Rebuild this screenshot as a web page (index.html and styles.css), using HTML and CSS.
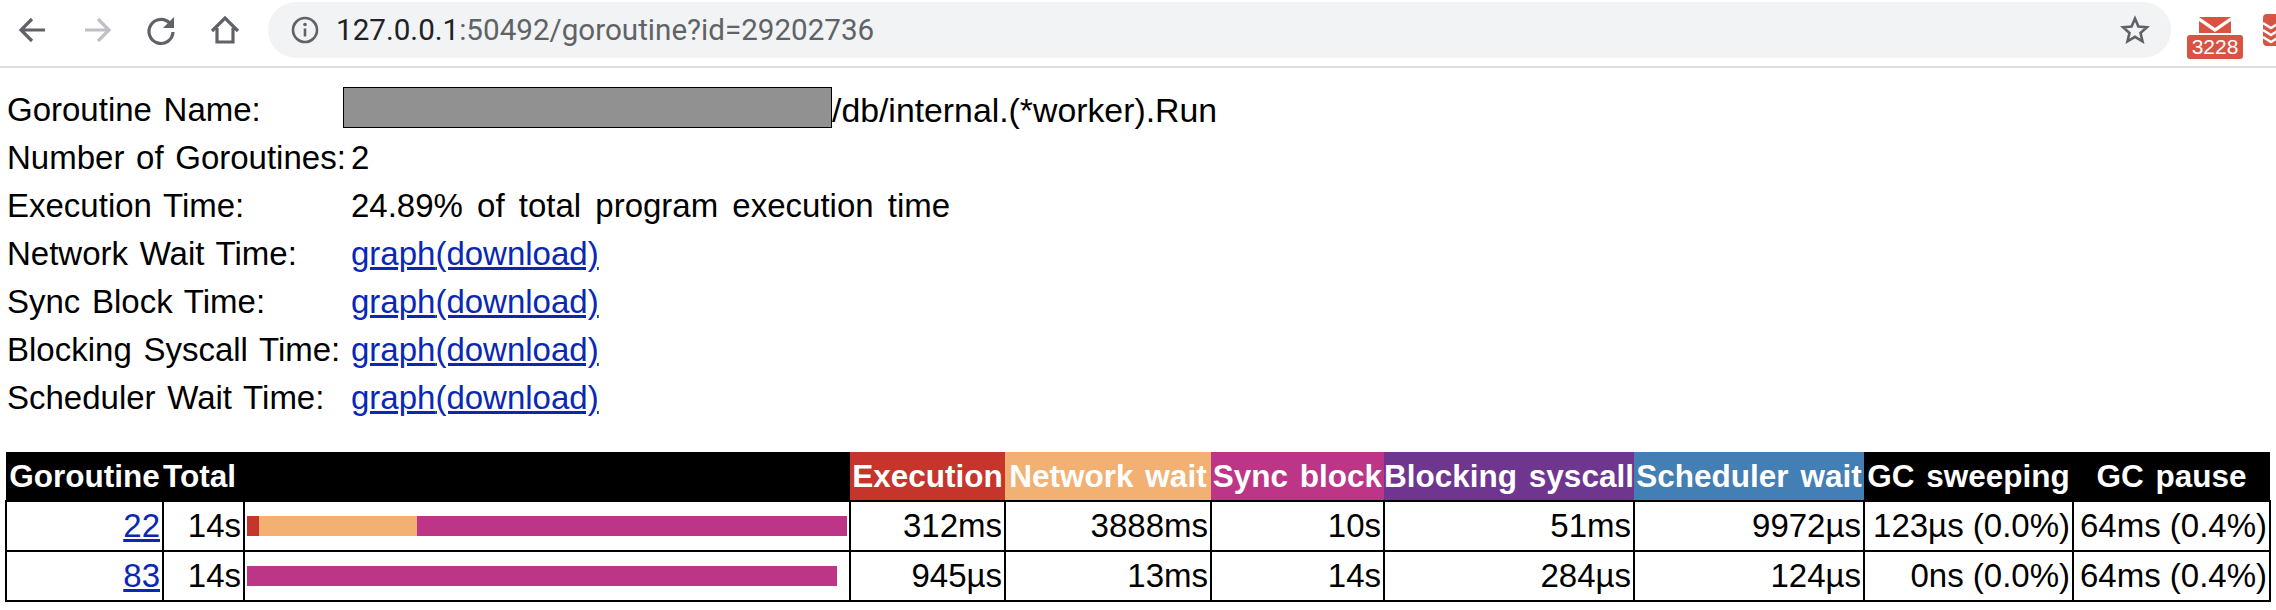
FILE: index.html
```html
<!DOCTYPE html>
<html lang="en">
<head>
<meta charset="utf-8">
<title>Goroutine</title>
<link rel="stylesheet" href="styles.css">
</head>
<body>
<header class="toolbar">
  <nav class="nav-icons">
    <svg class="nav-icon" viewBox="0 0 34 34"><path d="M29 17H6M16 6 5 17l11 11" class="stroke dark"/></svg>
    <svg class="nav-icon" viewBox="0 0 34 34"><path d="M5 17h23M18 6l11 11-11 11" class="stroke light"/></svg>
    <svg class="nav-icon" viewBox="0 0 34 34"><path d="M26 10.5A12 12 0 1 0 29 19" class="stroke dark"/><path d="M30 4v11H19z" class="fill"/></svg>
    <svg class="nav-icon" viewBox="0 0 34 34"><path d="M4 18 17 5l13 13M9 15v14h16V15" class="stroke dark"/></svg>
  </nav>
  <div class="omnibox">
    <svg class="info-icon" viewBox="0 0 28 28"><circle cx="14" cy="14" r="12" class="thin"/><path d="M14 12.5v8" class="thin"/><circle cx="14" cy="8.5" r="1.8" class="fill"/></svg>
    <div class="url"><span class="host">127.0.0.1</span>:50492/goroutine?id=29202736</div>
    <svg class="star" viewBox="0 0 30 30"><path d="M15 3.5l3.4 8 8.6.7-6.5 5.7 2 8.4-7.5-4.5-7.5 4.5 2-8.4L3 12.2l8.6-.7z" class="thin"/></svg>
  </div>
  <div class="extensions">
    <div class="mail">
      <svg class="envelope" viewBox="0 0 32 16"><path d="M0 0h32L16 11z" class="red"/><path d="M0 4l16 11L32 4v12H0z" class="red"/></svg>
      <div class="badge">3228</div>
    </div>
    <svg class="layers" viewBox="0 0 32 32"><rect width="32" height="32" rx="4" class="red"/><path d="M0 9l8 5 8-5M0 16l8 5 8-5M0 23l8 5 8-5" class="white-line"/></svg>
  </div>
</header>

<table class="info">
  <tr><td class="label">Goroutine Name:</td><td class="value name"><span class="name-tail">/db/internal.(*worker).Run</span><span class="redacted"></span></td></tr>
  <tr><td class="label">Number of Goroutines:</td><td class="value">2</td></tr>
  <tr><td class="label">Execution Time:</td><td class="value wide-words">24.89% of total program execution time</td></tr>
  <tr><td class="label">Network Wait Time:</td><td class="value"><a href="#">graph</a><a href="#">(download)</a></td></tr>
  <tr><td class="label">Sync Block Time:</td><td class="value"><a href="#">graph</a><a href="#">(download)</a></td></tr>
  <tr><td class="label">Blocking Syscall Time:</td><td class="value"><a href="#">graph</a><a href="#">(download)</a></td></tr>
  <tr><td class="label">Scheduler Wait Time:</td><td class="value"><a href="#">graph</a><a href="#">(download)</a></td></tr>
</table>

<table class="stats">
  <colgroup>
    <col class="c-id"><col class="c-total"><col class="c-bar"><col class="c-exec"><col class="c-net"><col class="c-sync"><col class="c-sys"><col class="c-sched"><col class="c-sweep"><col class="c-pause">
  </colgroup>
  <thead>
    <tr>
      <th>Goroutine</th><th class="left">Total</th><th></th>
      <th class="exec">Execution</th><th class="net">Network wait</th><th class="sync">Sync block</th><th class="sys">Blocking syscall</th><th class="sched">Scheduler wait</th>
      <th>GC sweeping</th><th>GC pause</th>
    </tr>
  </thead>
  <tbody>
    <tr>
      <td><a href="#">22</a></td><td>14s</td>
      <td class="bar-cell"><div class="bar"><span class="exec" style="width:12px"></span><span class="net" style="width:158px"></span><span class="sync" style="width:430px"></span></div></td>
      <td>312ms</td><td>3888ms</td><td>10s</td><td>51ms</td><td>9972µs</td><td>123µs (0.0%)</td><td>64ms (0.4%)</td>
    </tr>
    <tr>
      <td><a href="#">83</a></td><td>14s</td>
      <td class="bar-cell"><div class="bar"><span class="sync" style="width:590px"></span></div></td>
      <td>945µs</td><td>13ms</td><td>14s</td><td>284µs</td><td>124µs</td><td>0ns (0.0%)</td><td>64ms (0.4%)</td>
    </tr>
  </tbody>
</table>
</body>
</html>
```
FILE: styles.css
```css
html, body {
  margin: 0;
  background: #fff;
  color: #000;
  font-family: "Liberation Sans", Arial, sans-serif;
}

body {
  height: 610px;
  overflow: hidden;
}

.toolbar {
  display: flex;
  align-items: flex-start;
  height: 64px;
  padding-top: 2px;
  border-bottom: 2px solid #dedfe0;
  box-sizing: content-box;
}

.nav-icons {
  display: flex;
  flex: none;
  gap: 30px;
  width: 268px;
  padding: 11px 0 0 16px;
  box-sizing: border-box;
}

.nav-icon {
  width: 34px;
  height: 34px;
}

.stroke {
  fill: none;
  stroke-width: 3.2;
}

.dark { stroke: #5f6368; }
.light { stroke: #bdc1c6; }
.fill { fill: #5f6368; }

.thin {
  fill: none;
  stroke: #5f6368;
  stroke-width: 2.6;
}

.omnibox {
  display: flex;
  align-items: center;
  flex: none;
  width: 1903px;
  height: 56px;
  border-radius: 28px;
  background: #f1f3f4;
  padding: 0 21px;
  box-sizing: border-box;
}

.info-icon {
  width: 28px;
  height: 28px;
  margin-left: 2px;
}

.url {
  flex: 1;
  margin-left: 17px;
  font-family: Roboto, "Liberation Sans", sans-serif;
  font-size: 29.6px;
  color: #5f6368;
}

.host {
  color: #202124;
}

.star {
  width: 30px;
  height: 30px;
}

.extensions {
  display: flex;
  flex: none;
  align-items: flex-start;
  gap: 20px;
  padding: 12px 0 0 16px;
}

.mail {
  display: flex;
  flex-direction: column;
  align-items: center;
  width: 56px;
  gap: 2px;
  padding-top: 3px;
}

.envelope {
  width: 32px;
  height: 16px;
}

.red { fill: #d75442; }

.badge {
  width: 56px;
  height: 24px;
  border-radius: 3px;
  background: #d75442;
  color: #fff;
  font-size: 21px;
  line-height: 24px;
  text-align: center;
}

.layers {
  flex: none;
  width: 32px;
  height: 32px;
}

.white-line {
  fill: none;
  stroke: #fff;
  stroke-width: 2.4;
}

.info {
  border-collapse: collapse;
  margin: 18px 0 0 7px;
  font-size: 33px;
}

.info td {
  height: 48px;
  padding: 0;
  white-space: nowrap;
}

.label {
  width: 344px;
  word-spacing: 2.5px;
}

.wide-words {
  word-spacing: 5px;
}

.name {
  position: relative;
}

.redacted {
  position: absolute;
  left: -8px;
  top: 1px;
  width: 487px;
  height: 39px;
  border: 1px solid #000;
  background: #919191;
}

.name-tail {
  display: inline-block;
  padding-left: 481px;
  font-size: 33.8px;
}

a {
  color: #0a28b4;
}

.stats {
  table-layout: fixed;
  border-collapse: collapse;
  width: 2264px;
  margin: 30px 0 0 5px;
  font-size: 33px;
}

.c-id { width: 157px; }
.c-total { width: 81px; }
.c-bar { width: 606px; }
.c-exec { width: 155px; }
.c-net { width: 206px; }
.c-sync { width: 173px; }
.c-sys { width: 250px; }
.c-sched { width: 230px; }
.c-sweep { width: 209px; }
.c-pause { width: 197px; }

.stats th {
  height: 48px;
  padding: 0;
  background: #000;
  color: #fff;
  font-size: 31.5px;
  font-weight: bold;
  word-spacing: 3px;
  white-space: nowrap;
  border-bottom: 2px solid #000;
}

.stats th.left { text-align: left; }
.stats th.exec { background: #c5352c; }
.stats th.net { background: #f2b172; }
.stats th.sync { background: #bd3587; }
.stats th.sys { background: #6f368f; }
.stats th.sched { background: #437eb4; }

.stats td {
  height: 48px;
  padding: 0 2px;
  border: 2px solid #000;
  text-align: right;
  white-space: nowrap;
}

.stats td.bar-cell {
  padding: 0 2px;
}

.bar {
  display: flex;
  height: 20px;
}

.bar span.exec { background: #c5352c; }
.bar span.net { background: #f2b172; }
.bar span.sync { background: #bd3587; }
```
